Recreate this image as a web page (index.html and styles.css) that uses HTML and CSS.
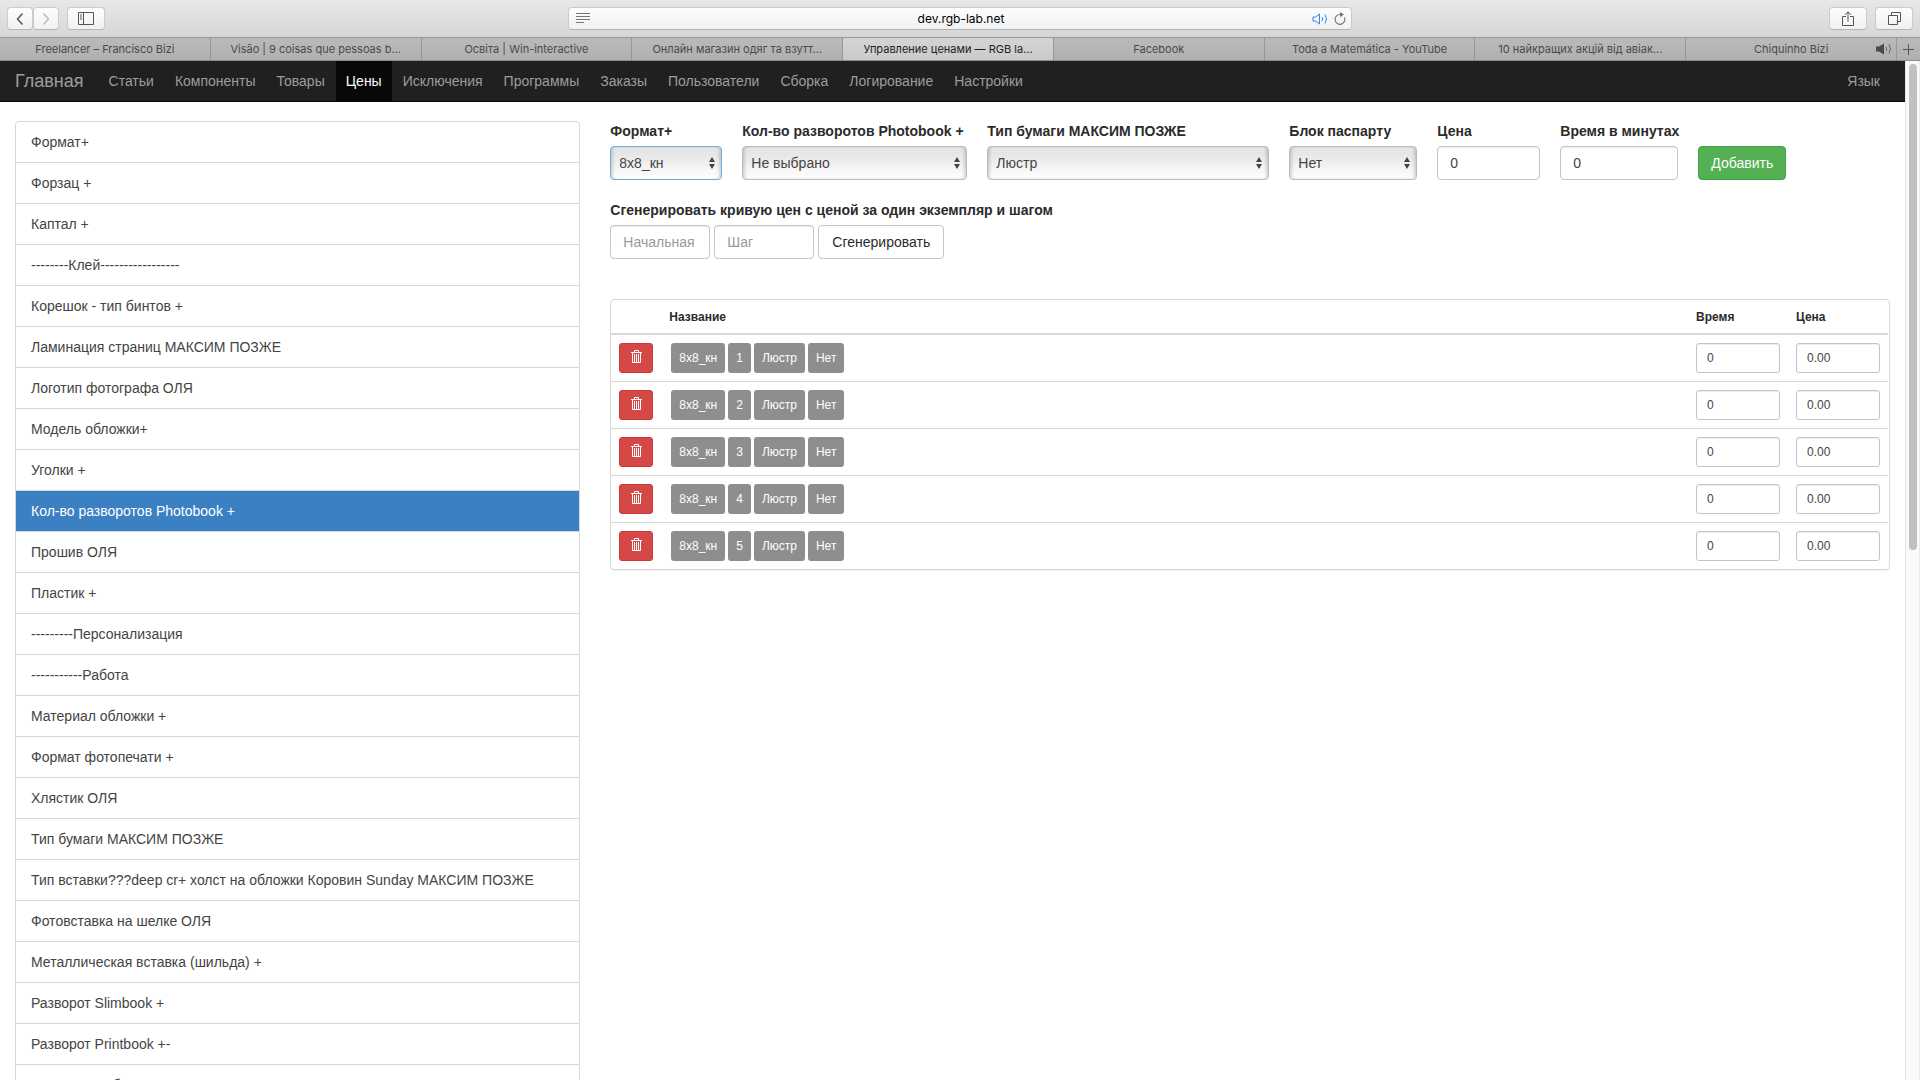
FILE: index.html
```html
<!DOCTYPE html>
<html lang="ru">

<head>
  <meta charset="utf-8">
  <title>Управление ценами — RGB lab</title>
  <link rel="stylesheet" href="styles.css">
</head>

<body>
  <header class="browser">
    <div class="toolbar">
      <div class="tools">
        <div class="tool-pair">
          <button type="button" class="tool small" aria-label="Back"><svg width="8" height="14" viewBox="0 0 8 14"><path d="M6.500 1.500L1.500 7l5 5.500" fill="none" stroke="#555" stroke-width="1.500"/></svg></button>
          <button type="button" class="tool small" aria-label="Forward"><svg width="8" height="14" viewBox="0 0 8 14"><path d="M1.500 1.500l5 5.500-5 5.500" fill="none" stroke="#bbb" stroke-width="1.500"/></svg></button>
        </div>
        <button type="button" class="tool" aria-label="Sidebar"><svg width="16" height="13" viewBox="0 0 16 13"><path d="M.5.5h15v12H.5zM5.500.5v12M2 3h2M2 5h2M2 7h2" fill="none" stroke="#555"/></svg></button>
      </div>
      <div class="address">
        <svg width="14" height="11" viewBox="0 0 14 11"><path d="M0 .5h14M0 3.500h14M0 6.500h14M0 9.500h8" stroke="#777"/></svg>
        <input type="text" class="url" value="dev.rgb-lab.net" aria-label="Address">
        <svg width="16" height="12" viewBox="0 0 16 12"><path d="M1 4h2.500L7.500 1v10L3.500 8H1zM10 4q1.500 2 0 4M13 1.500q3 4.500 0 9" fill="none" stroke="#2f87f5"/></svg>
        <svg width="12" height="13" viewBox="0 0 12 13"><path d="M10.500 5.500A4.900 4.900 0 1 1 6 2.500h1.500" fill="none" stroke="#777" stroke-width="1.200"/><path d="M6 0l4 2.500L6 5.200z" fill="#777"/></svg>
      </div>
      <div class="tools tools-right">
        <button type="button" class="tool" aria-label="Share"><svg width="12" height="16" viewBox="0 0 12 16"><path d="M4 5.500H.5v9h11v-9H8M6 10.500V1M3 3.800L6 .8l3 3" fill="none" stroke="#555"/></svg></button>
        <button type="button" class="tool" aria-label="Tabs"><svg width="13" height="13" viewBox="0 0 13 13"><path d="M.5 3.500h9v9h-9zM3.500 3V.5h9v9H10" fill="none" stroke="#555"/></svg></button>
      </div>
    </div>
    <div class="tabs">
      <a href="#" class="tab">Freelancer – Francisco Bizi</a>
      <a href="#" class="tab">Visão | 9 coisas que pessoas b...</a>
      <a href="#" class="tab">Освіта | Win-interactive</a>
      <a href="#" class="tab">Онлайн магазин одяг та взутт...</a>
      <a href="#" class="tab current">Управление ценами — RGB la...</a>
      <a href="#" class="tab">Facebook</a>
      <a href="#" class="tab">Toda a Matemática - YouTube</a>
      <a href="#" class="tab">10 найкращих акцій від авіак...</a>
      <a href="#" class="tab">Chiquinho Bizi
        <svg class="sound" width="16" height="12" viewBox="0 0 16 12"><path d="M0 3.500h3L8 .5v11L3 8.500H0z" fill="#4a4a4a"/><path d="M10 4q1.500 2 0 4M13 1.500q3 4.500 0 9" fill="none" stroke="#666"/></svg></a>
      <button type="button" class="new-tab" aria-label="New tab"><svg width="11" height="11" viewBox="0 0 11 11"><path d="M5.500 0v11M0 5.500h11" stroke="#555"/></svg></button>
    </div>
  </header>

  <div class="viewport">
    <div class="page">
      <nav class="navbar">
        <a href="#" class="brand">Главная</a>
        <a href="#">Статьи</a>
        <a href="#">Компоненты</a>
        <a href="#">Товары</a>
        <a href="#" class="active">Цены</a>
        <a href="#">Исключения</a>
        <a href="#">Программы</a>
        <a href="#">Заказы</a>
        <a href="#">Пользователи</a>
        <a href="#">Сборка</a>
        <a href="#">Логирование</a>
        <a href="#">Настройки</a>
        <a href="#" class="lang">Язык</a>
      </nav>

      <main class="content">
        <div class="list-group">
          <a href="#">Формат+</a>
          <a href="#">Форзац +</a>
          <a href="#">Каптал +</a>
          <a href="#">--------Клей-----------------</a>
          <a href="#">Корешок - тип бинтов +</a>
          <a href="#">Ламинация страниц МАКСИМ ПОЗЖЕ</a>
          <a href="#">Логотип фотографа ОЛЯ</a>
          <a href="#">Модель обложки+</a>
          <a href="#">Уголки +</a>
          <a href="#" class="active">Кол-во разворотов Photobook +</a>
          <a href="#">Прошив ОЛЯ</a>
          <a href="#">Пластик +</a>
          <a href="#">---------Персонализация</a>
          <a href="#">-----------Работа</a>
          <a href="#">Материал обложки +</a>
          <a href="#">Формат фотопечати +</a>
          <a href="#">Хлястик ОЛЯ</a>
          <a href="#">Тип бумаги МАКСИМ ПОЗЖЕ</a>
          <a href="#">Тип вставки???deep cr+ холст на обложки Коровин Sunday МАКСИМ ПОЗЖЕ</a>
          <a href="#">Фотовставка на шелке ОЛЯ</a>
          <a href="#">Металлическая вставка (шильда) +</a>
          <a href="#">Разворот Slimbook +</a>
          <a href="#">Разворот Printbook +-</a>
          <a href="#">Развороты обложки</a>
        </div>

        <div class="prices">
          <form class="add-form">
            <div class="field format">
              <label for="format">Формат+</label>
              <div class="select focus"><select id="format"><option>8x8_кн</option></select><svg width="6" height="12" viewBox="0 0 6 12"><path d="M3 0l3 5H0zM0 7h6l-3 5z" fill="#444"/></svg></div>
            </div>
            <div class="field spreads">
              <label for="spreads">Кол-во разворотов Photobook +</label>
              <div class="select"><select id="spreads"><option>Не выбрано</option></select><svg width="6" height="12" viewBox="0 0 6 12"><path d="M3 0l3 5H0zM0 7h6l-3 5z" fill="#444"/></svg></div>
            </div>
            <div class="field paper">
              <label for="paper">Тип бумаги МАКСИМ ПОЗЖЕ</label>
              <div class="select"><select id="paper"><option>Люстр</option></select><svg width="6" height="12" viewBox="0 0 6 12"><path d="M3 0l3 5H0zM0 7h6l-3 5z" fill="#444"/></svg></div>
            </div>
            <div class="field passe">
              <label for="passe">Блок паспарту</label>
              <div class="select"><select id="passe"><option>Нет</option></select><svg width="6" height="12" viewBox="0 0 6 12"><path d="M3 0l3 5H0zM0 7h6l-3 5z" fill="#444"/></svg></div>
            </div>
            <div class="field price">
              <label for="price">Цена</label>
              <input type="text" class="control" id="price" value="0">
            </div>
            <div class="field time">
              <label for="time">Время в минутах</label>
              <input type="text" class="control" id="time" value="0">
            </div>
            <button type="button" class="btn btn-success">Добавить</button>
          </form>

          <form class="curve-form">
            <label for="start">Сгенерировать кривую цен с ценой за один экземпляр и шагом</label>
            <div class="curve-row">
              <input type="text" class="control" id="start" placeholder="Начальная">
              <input type="text" class="control" placeholder="Шаг" aria-label="Шаг">
              <button type="button" class="btn btn-default">Сгенерировать</button>
            </div>
          </form>

          <div class="panel">
            <table>
              <thead>
                <tr>
                  <th class="col-del"></th>
                  <th>Название</th>
                  <th class="col-num">Время</th>
                  <th class="col-num">Цена</th>
                </tr>
              </thead>
              <tbody id="rows"></tbody>
            </table>
          </div>
        </div>
      </main>
    </div>
    <div class="scrollbar"><div class="thumb"></div></div>
  </div>

  <script>
    const rows = document.getElementById('rows');
    const trash = '<svg width="11" height="13" viewBox="0 0 11 13"><path d="M0 2.500h11M3.500 2V.5h4V2M1.500 3v9.500h8V3M3.500 4v8M5.500 4v8M7.500 4v8" fill="none" stroke="#fff"/></svg>';
    for (let i = 1; i <= 5; i++) {
      rows.innerHTML += `<tr>
        <td><button type="button" class="btn-delete" aria-label="Удалить">${trash}</button></td>
        <td><div class="labels"><span>8x8_кн</span><span>${i}</span><span>Люстр</span><span>Нет</span></div></td>
        <td><input type="text" class="control control-sm" value="0" aria-label="Время"></td>
        <td><input type="text" class="control control-sm" value="0.00" aria-label="Цена"></td>
      </tr>`;
    }
  </script>
</body>

</html>
```

FILE: styles.css
```css
* {
  box-sizing: border-box;
}

body {
  margin: 0;
  height: 100vh;
  display: flex;
  flex-direction: column;
  overflow: hidden;
  font-family: "Liberation Sans", Arial, sans-serif;
  font-size: 14px;
  line-height: 20px;
  color: #2b2b2b;
  background: #fff;
}

a {
  text-decoration: none;
}

button,
input,
select {
  font-family: inherit;
  font-size: 14px;
}

/* browser window */
.browser {
  flex: none;
  font-family: Inter, sans-serif;
}

.toolbar {
  display: grid;
  grid-template-columns: 5fr 7fr 5fr;
  padding: 7px;
  background: linear-gradient(#e8e8e8, #d6d6d6);
}

.tools {
  display: flex;
  gap: 8px;
}

.tools-right {
  justify-content: flex-end;
}

.tool-pair {
  display: flex;
}

.tool {
  display: flex;
  align-items: center;
  justify-content: center;
  width: 38px;
  height: 23px;
  padding: 0;
  border: 1px solid #cbcbcb;
  border-bottom-color: #b4b4b4;
  border-radius: 4px;
  background: linear-gradient(#fdfdfd, #f1f1f1);
}

.small {
  width: 26px;
}

.address {
  display: flex;
  align-items: center;
  gap: 6px;
  height: 23px;
  padding: 0 5px 0 7px;
  border: 1px solid #cbcbcb;
  border-bottom-color: #b4b4b4;
  border-radius: 4px;
  background: linear-gradient(#fdfdfd, #f1f1f1);
}

.url {
  flex: 1;
  min-width: 0;
  padding: 0 0 0 20px;
  border: 0;
  background: none;
  text-align: center;
  font-size: 12px;
  color: #000;
}

.tabs {
  display: flex;
  height: 24px;
  border-top: 1px solid #989898;
  border-bottom: 1px solid #8c8c8c;
  background: linear-gradient(#bababa, #b0b0b0);
}

.tab {
  position: relative;
  flex: 1 1 0;
  min-width: 0;
  border-right: 1px solid #969696;
  overflow: hidden;
  white-space: nowrap;
  text-align: center;
  font-size: 11px;
  line-height: 22px;
  color: #4a4a4a;
}

.tab.current {
  background: linear-gradient(#d4d4d4, #cbcbcb);
  color: #222;
}

.sound {
  position: absolute;
  top: 5px;
  right: 4px;
}

.new-tab {
  display: flex;
  align-items: center;
  justify-content: center;
  width: 23px;
  padding: 0;
  border: 0;
  background: none;
}

.viewport {
  flex: 1;
  display: flex;
  min-height: 0;
}

.page {
  flex: 1;
  min-width: 0;
  overflow: hidden;
}

.scrollbar {
  width: 15px;
  padding: 3px 2px 3px 3px;
  border-left: 1px solid #e4e4e4;
  border-right: 1px solid #ececec;
  background: #fafafa;
}

.thumb {
  width: 8px;
  height: 48%;
  border-radius: 4px;
  background: #c1c1c1;
}

/* navbar */
.navbar {
  display: flex;
  gap: 1px;
  padding: 0 15px 0 0;
  border-bottom: 1px solid #080808;
  background: #202020;
}

.navbar a {
  padding: 10px;
  color: #9d9d9d;
}

.navbar .brand {
  padding: 10px 14px 10px 15px;
  font-size: 18px;
}

.navbar .active {
  background: #080808;
  color: #fff;
}

.navbar .lang {
  margin-left: auto;
}

/* content */
.content {
  display: grid;
  grid-template-columns: 5fr 11fr;
  padding-top: 19px;
}

.list-group {
  padding: 0 15px;
}

.list-group a {
  display: block;
  margin-bottom: -1px;
  padding: 10px 15px;
  border: 1px solid #d8d8d8;
  color: #444;
}

.list-group a:first-child {
  border-radius: 4px 4px 0 0;
}

.list-group .active {
  background: #3b80c3;
  background-clip: padding-box;
  color: #fff;
}

.prices {
  padding: 0 15px;
}

label {
  display: block;
  margin-bottom: 5px;
  font-weight: bold;
  white-space: nowrap;
}

.add-form {
  display: flex;
  align-items: flex-end;
  gap: 20px;
  margin-bottom: 20px;
}

.format {
  width: 112px;
}

.spreads {
  width: 225px;
}

.paper {
  width: 282px;
}

.passe {
  width: 128px;
}

.price {
  width: 103px;
}

.time {
  width: 118px;
}

.control {
  display: block;
  width: 100%;
  height: 34px;
  padding: 6px 12px;
  border: 1px solid #c4c4c4;
  border-radius: 4px;
  background: #fff;
  box-shadow: inset 0 1px 1px rgba(0, 0, 0, 0.075);
  color: #444;
}

.control::placeholder {
  color: #999;
}

.control-sm {
  height: 30px;
  padding: 5px 10px;
  border-radius: 3px;
  font-size: 12px;
}

.select {
  display: flex;
  align-items: center;
  height: 34px;
  padding-right: 6px;
  border: 1px solid #bbb;
  border-radius: 4px;
  background: linear-gradient(#e6e6e6 20%, #fff);
  box-shadow: inset 3px 0 3px -1px rgba(0, 0, 0, 0.15), inset -3px 0 3px -1px rgba(0, 0, 0, 0.15);
}

.select.focus {
  border-color: #66afe9;
}

.select select {
  flex: 1;
  min-width: 0;
  height: 32px;
  padding: 0 8px;
  border: 0;
  outline: 0;
  appearance: none;
  background: none;
  color: #444;
}

.btn {
  height: 34px;
  padding: 6px 12px;
  border: 1px solid #c4c4c4;
  border-radius: 4px;
  white-space: nowrap;
}

.btn-success {
  background: #53b053;
  border-color: #43a047;
  color: #fff;
}

.btn-default {
  padding: 6px 13px;
  background: #fff;
  color: #2b2b2b;
}

.curve-form {
  margin-bottom: 40px;
}

.curve-row {
  display: flex;
  gap: 4px;
}

.curve-row .control {
  width: 100px;
}

.panel {
  padding-right: 1px;
  border: 1px solid #d8d8d8;
  border-radius: 4px;
  box-shadow: 0 1px 1px rgba(0, 0, 0, 0.05);
}

table {
  width: 100%;
  table-layout: fixed;
  border-collapse: separate;
  border-spacing: 0;
  font-size: 12px;
}

th {
  padding: 9px 8px 7px;
  border-bottom: 2px solid #d8d8d8;
  line-height: 17px;
  text-align: left;
}

td {
  padding: 8px;
  border-bottom: 1px solid #d8d8d8;
}

tr:last-child td {
  border-bottom: 0;
}

.col-del {
  width: 50px;
}

.col-num {
  width: 100px;
}

.btn-delete {
  display: flex;
  align-items: flex-start;
  justify-content: center;
  width: 34px;
  height: 30px;
  padding: 6px 0 0;
  border: 1px solid #cf3a38;
  border-radius: 3px;
  background: #d44946;
}

.labels {
  display: flex;
  gap: 3px;
  padding: 0 2px;
}

.labels span {
  padding: 0 8px;
  border-radius: 3px;
  background: #8e8e8e;
  color: #fff;
  line-height: 30px;
}
```
